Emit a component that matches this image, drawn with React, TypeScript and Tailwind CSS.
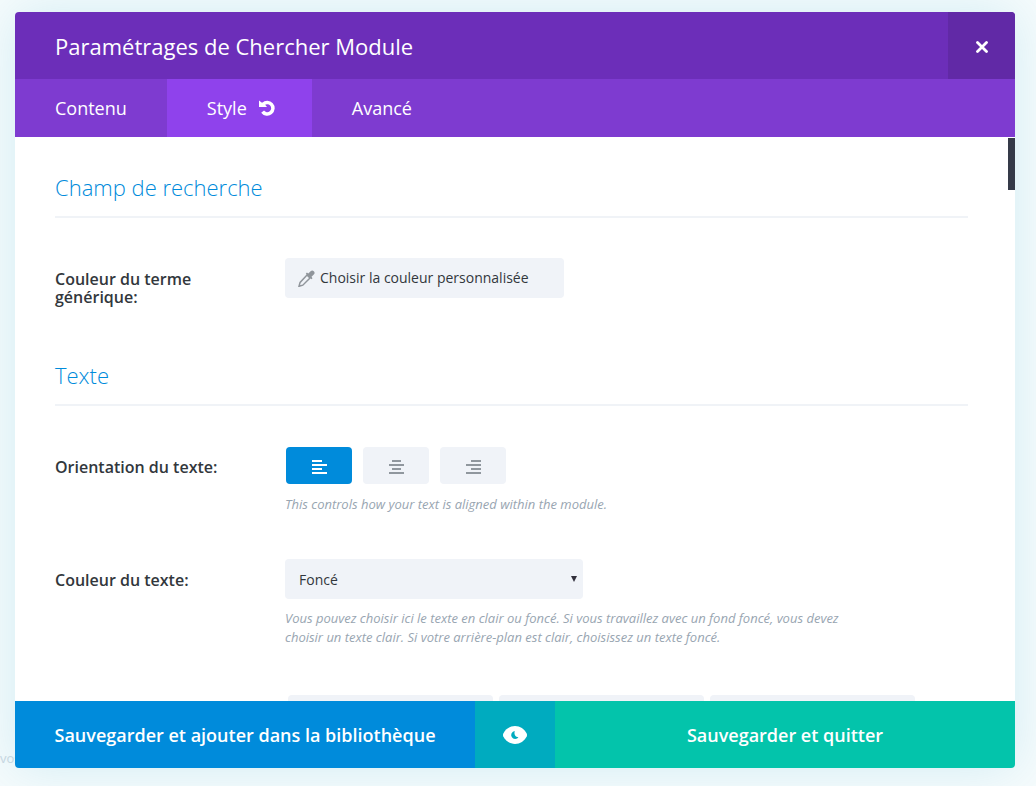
import type { ReactNode } from "react";

function Heading({ children }: { children: ReactNode }) {
  return (
    <h2 className="border-b-2 border-[#f0f3f7] pb-[14px] text-[22px] leading-[30px] font-light text-[#008bdb]">
      {children}
    </h2>
  );
}

function Row({ label, htmlFor, children }: { label: string; htmlFor?: string; children: ReactNode }) {
  const text = "w-[190px] shrink-0 pt-3 text-base leading-[18px] font-semibold text-[#32373c]";
  return (
    <div className="flex gap-10">
      {htmlFor ? (
        <label htmlFor={htmlFor} className={text}>{label}</label>
      ) : (
        <span className={text}>{label}</span>
      )}
      <div className="min-w-0 flex-1">{children}</div>
    </div>
  );
}

function Hint({ children }: { children: ReactNode }) {
  return (
    <p className="max-w-[570px] text-[13px] leading-[19px] text-[#98a5b1] italic">{children}</p>
  );
}

const alignments = [
  { name: "Gauche", d: "M0 0h10v2H0zM0 4h15v2H0zM0 8h10v2H0zM0 12h15v2H0z" },
  { name: "Centre", d: "M3 0h9v2H3zM0 4h15v2H0zM3 8h9v2H3zM0 12h15v2H0z" },
  { name: "Droite", d: "M5 0h10v2H5zM0 4h15v2H0zM5 8h10v2H5zM0 12h15v2H0z" },
];

export default function App() {
  return (
    <div className="relative flex h-screen flex-col overflow-hidden bg-[#f5fbfc] pt-3 pr-[21px] pb-[18px] pl-[15px] font-['Open_Sans','Noto_Sans',sans-serif]">
      <span className="absolute bottom-[18px] left-0 text-[13px] text-[#cbd8e2]">vos</span>
      <main className="relative flex min-h-0 flex-1 flex-col overflow-hidden rounded bg-white shadow-[0_0_50px_rgba(0,150,200,0.14)]">
        <header className="flex h-[67px] shrink-0 items-stretch justify-between bg-[#6c2eb9] text-white">
          <h1 className="flex items-center pt-[2px] pl-10 text-[22px]">Paramétrages de Chercher Module</h1>
          <button type="button" aria-label="Fermer" className="flex w-[67px] items-center justify-center bg-[#6129a6] pt-[2px]">
            <svg width="12" height="12" viewBox="0 0 12 12" fill="none" stroke="currentColor" strokeWidth="2.8" strokeLinecap="round">
              <path d="M1.500 1.500l9 9M10.500 1.500l-9 9" />
            </svg>
          </button>
        </header>
        <nav className="flex h-[58px] shrink-0 bg-[#7e3bd0] text-lg font-medium text-white">
          <button type="button" className="px-10">Contenu</button>
          <button type="button" aria-current="page" className="flex items-center gap-3 bg-[#8f42ec] pr-[37px] pl-10">
            Style
            <svg width="16" height="16" viewBox="0 0 16 16" fill="none">
              <path d="M4.200 4.200A5.700 5.700 0 1 1 3.600 11.600" stroke="white" strokeWidth="3.500" />
              <path d="M0 .5l2.600 2L5 3.200 8 7H0z" fill="white" />
            </svg>
          </button>
          <button type="button" className="px-10">Avancé</button>
        </nav>
        <div className="relative min-h-0 flex-1 overflow-hidden pt-[35px] pr-[47px] pl-10">
          <div className="absolute top-px right-0 h-[52px] w-[7px] bg-[#353a48]" />
          <Heading>Champ de recherche</Heading>
          <div className="pt-10 pb-[54px]">
            <Row label="Couleur du terme générique:">
              <button type="button" className="flex h-10 w-[279px] items-center gap-[5px] rounded bg-[#f0f3f8] pl-[13px] text-sm text-[#32373c]">
                <svg width="17" height="17" viewBox="0 0 17 17" fill="none">
                  <path d="M9 5l3 3-7.200 7.200-3.800 1.100 1.100-3.900z" stroke="#90959b" strokeWidth="1.500" />
                  <path d="M7.800 3.700l1.100-1.100 1.400 1L12.600 1.300a2.200 2.200 0 0 1 3.200 3.200L13.500 6.800l1 1.400-1.100 1.100z" fill="#90959b" />
                </svg>
                Choisir la couleur personnalisée
              </button>
            </Row>
          </div>
          <Heading>Texte</Heading>
          <div className="flex flex-col gap-[45px] pt-10">
            <Row label="Orientation du texte:">
              <div role="group" aria-label="Orientation du texte" className="flex gap-[11px] pt-px pb-[11px] pl-px">
                {alignments.map((a, i) => (
                  <button
                    key={a.name}
                    type="button"
                    aria-label={a.name}
                    aria-pressed={i === 0}
                    className={`flex h-[37px] w-[66px] items-center justify-center rounded pt-[3px] ${i === 0 ? "bg-[#008bdb] text-white" : "bg-[#f0f3f8] text-[#90979e]"}`}
                  >
                    <svg width="15" height="14" viewBox="0 0 15 14" fill="currentColor"><path d={a.d} /></svg>
                  </button>
                ))}
              </div>
              <Hint>This controls how your text is aligned within the module.</Hint>
            </Row>
            <Row label="Couleur du texte:" htmlFor="couleur-texte">
              <div className="relative mb-[10px] w-[298px]">
                <select id="couleur-texte" className="h-10 w-full appearance-none rounded bg-[#f0f3f8] px-[14px] pt-px text-sm text-[#32373c]">
                  <option>Foncé</option>
                  <option>Clair</option>
                </select>
                <svg className="pointer-events-none absolute top-[17px] right-[6px]" width="6" height="6" viewBox="0 0 6 6"><path d="M0 0h6L3 6z" fill="#32303c" /></svg>
              </div>
              <Hint>
                Vous pouvez choisir ici le texte en clair ou foncé. Si vous travaillez avec un fond foncé, vous devez
                choisir un texte clair. Si votre arrière-plan est clair, choisissez un texte foncé.
              </Hint>
            </Row>
            <div className="flex gap-[6px] pt-[3px] pl-[233px]">
              {[0, 1, 2].map((i) => (
                <div key={i} className="h-10 w-[205px] shrink-0 rounded bg-[#f0f3f8]" />
              ))}
            </div>
          </div>
        </div>
        <footer className="flex h-[67px] shrink-0 text-lg font-semibold text-white">
          <button type="button" className="w-[46%] bg-[#008bdb] whitespace-nowrap">Sauvegarder et ajouter dans la bibliothèque</button>
          <button type="button" aria-label="Aperçu" className="flex w-[8%] items-center justify-center bg-[#00abbf]">
            <svg width="24" height="18" viewBox="0 0 24 18">
              <path d="M12 0c5 0 9.500 3 11.700 7.500.4 1 .4 2 0 3C21.500 15 17 18 12 18S2.500 15 .3 10.500c-.4-1-.4-2 0-3C2.500 3 7 0 12 0z" fill="white" />
              <path d="M11.800 5a4 4 0 1 0 3.700 6.200C12.800 11.300 10.600 8.500 11.800 5z" fill="#00abbf" />
            </svg>
          </button>
          <button type="button" className="flex-1 bg-[#03c4ab]">Sauvegarder et quitter</button>
        </footer>
      </main>
    </div>
  );
}
